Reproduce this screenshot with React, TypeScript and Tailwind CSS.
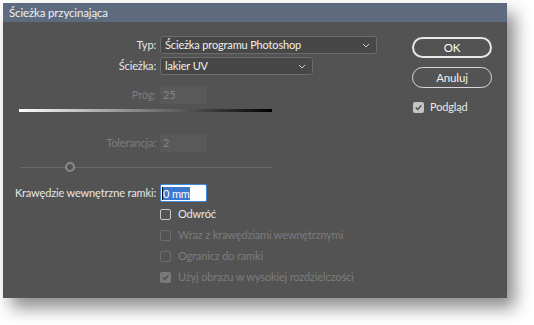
import React from 'react';

const font = { fontFamily: 'Lato, "Open Sans", sans-serif', letterSpacing: '-0.15px' };

const Chevron = () => (
  <svg width="8" height="5" viewBox="0 0 8 5" className="shrink-0">
    <path d="M1 1 L4 4 L7 1" fill="none" stroke="#cfcfcf" strokeWidth="1" />
  </svg>
);

const Check = ({ color }: { color: string }) => (
  <svg width="9" height="9" viewBox="0 0 9 9">
    <path d="M1.8 4.6 L3.7 6.5 L7.3 2.4" fill="none" stroke={color} strokeWidth="1.4" />
  </svg>
);

const Label = ({ text, dim }: { text: string; dim?: boolean }) => (
  <div className={'flex w-[141px] shrink-0 justify-end pr-[4px] ' + (dim ? 'text-[#7e7e7e]' : 'text-[#e6e6e6]')}>
    <span>{text}</span>
  </div>
);

type BoxProps = { label: string; checked?: boolean; disabled?: boolean };

const CheckRow = ({ label, checked, disabled }: BoxProps) => (
  <div className="flex h-[21px] items-center gap-[7px]">
    {checked ? (
      <div className="flex h-[11px] w-[11px] items-center justify-center rounded-[2px] bg-[#7a7a7a]">
        <Check color="#4f4f4f" />
      </div>
    ) : (
      <div
        className={
          disabled
            ? 'h-[11px] w-[11px] rounded-[2px] border border-[#6c6c6c]'
            : 'h-[11px] w-[11px] rounded-[2px] border border-[#c8c8c8]'
        }
      />
    )}
    <span className={disabled ? 'text-[#7c7c7c]' : 'text-[#e8e8e8]'}>{label}</span>
  </div>
);

export default function App() {
  return (
    <div className="h-[325px] w-[534px] overflow-hidden whitespace-nowrap bg-white pl-[3px] pt-[3px] text-[11px]" style={font}>
      <div className="flex h-[295px] w-[504px] flex-col bg-[#535353] shadow-[8px_10px_16px_rgba(0,0,0,0.45)]">
        <div className="flex h-[19px] items-center bg-[#5e6b7e] pl-[6px] text-[11.5px] text-[#eef0f3]">
          Ścieżka przycinająca
        </div>

        <div className="flex flex-1">
          {/* left side */}
          <div className="flex w-[409px] flex-col pl-[16px] pt-[14px]">
            <div className="flex h-[18px] items-center">
              <Label text="Typ:" />
              <div className="flex h-[18px] w-[217px] items-center justify-between rounded-[3px] border border-[#6c6c6c] bg-[#474747] pl-[4px] pr-[6px] text-[#f0f0f0]">
                <span>Ścieżka programu Photoshop</span>
                <Chevron />
              </div>
            </div>

            <div className="mt-[3px] flex h-[18px] items-center">
              <Label text="Ścieżka:" />
              <div className="flex h-[18px] w-[153px] items-center justify-between rounded-[3px] border border-[#6c6c6c] bg-[#474747] pl-[4px] pr-[6px] text-[#f0f0f0]">
                <span>lakier UV</span>
                <Chevron />
              </div>
            </div>

            <div className="mt-[11px] flex h-[18px] items-center">
              <Label text="Próg:" dim />
              <div className="flex h-[18px] w-[47px] items-center bg-[#595959] pl-[3px] text-[#858585]">25</div>
            </div>

            <div className="mt-[5px] h-[3px] w-[253px] bg-[linear-gradient(to_right,#ffffff,#8a8a8a_45%,#000000)]" />

            <div className="mt-[22px] flex h-[18px] items-center">
              <Label text="Tolerancja:" dim />
              <div className="flex h-[18px] w-[47px] items-center bg-[#595959] pl-[3px] text-[#858585]">2</div>
            </div>

            <div className="relative mt-[9px] h-[12px] w-[253px]">
              <div className="absolute left-[1px] right-0 top-[6px] h-px bg-[#6a6a6a]" />
              <div className="absolute left-[46px] top-[1px] h-[10px] w-[10px] rounded-full border-[2px] border-[#8a8a8a] bg-[#535353]" />
            </div>

            <div className="mt-[11px] flex h-[18px] items-center">
              <Label text="Krawędzie wewnętrzne ramki:" />
              <div className="flex h-[18px] w-[47px] items-center rounded-[2px] border border-[#3d8ae0] bg-white pl-[1px]">
                <span className="border-l border-black bg-[#3b78d0] leading-[13px] text-white">0 mm</span>
              </div>
            </div>

            <div className="ml-[141px] mt-[2px] flex flex-col">
              <CheckRow label="Odwróć" />
              <CheckRow label="Wraz z krawędziami wewnętrznymi" disabled />
              <CheckRow label="Ogranicz do ramki" disabled />
              <CheckRow label="Użyj obrazu w wysokiej rozdzielczości" checked disabled />
            </div>
          </div>

          {/* buttons */}
          <div className="flex w-[80px] flex-col pt-[15px]">
            <button className="h-[21px] w-[80px] rounded-full border-[2px] border-[#e8e8e8] text-[11.5px] text-white">
              OK
            </button>
            <button className="mt-[9px] h-[21px] w-[80px] rounded-full border border-[#d8d8d8] text-[11.5px] text-[#f0f0f0]">
              Anuluj
            </button>
            <div className="ml-[1px] mt-[11px] flex items-center gap-[6px]">
              <div className="flex h-[11px] w-[11px] items-center justify-center rounded-[2px] bg-[#c4c4c4]">
                <Check color="#4a4a4a" />
              </div>
              <span className="text-[#e8e8e8]">Podgląd</span>
            </div>
          </div>
        </div>
      </div>
    </div>
  );
}
